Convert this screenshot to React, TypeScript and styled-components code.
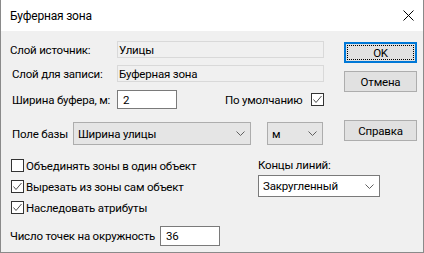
import React from 'react';
import styled, { createGlobalStyle } from 'styled-components';

const GlobalStyle = createGlobalStyle`
  html, body {
    margin: 0;
    padding: 0;
    background: #ffffff;
  }
  body {
    font-family: Roboto, "Noto Sans", "Liberation Sans", sans-serif;
    font-size: 11.5px;
    letter-spacing: -0.2px;
    color: #000000;
  }
  * { box-sizing: border-box; }
`

const Window = styled.div`
  width: 424px;
  height: 253px;
  border: 1px solid #8a8a8a;
  border-top: none;
  background: #f0f0f0;
  display: flex;
  flex-direction: column;
`

const TitleBar = styled.div`
  height: 31px;
  background: #ffffff;
  display: flex;
  align-items: center;
  padding-left: 9px;
  font-size: 12px;
`

const CloseBox = styled.div`
  margin-left: auto;
  width: 30px;
  height: 100%;
  display: flex;
  align-items: center;
  justify-content: center;
`

const Body = styled.div`
  display: flex;
  flex-direction: column;
  padding-left: 9px;
`

const TopSection = styled.div`
  display: flex;
`

const LeftPanel = styled.div`
  width: 314px;
  display: flex;
  flex-direction: column;
`

const Row = styled.div<{ $mt: number; $h: number }>`
  display: flex;
  align-items: center;
  margin-top: ${p => p.$mt}px;
  height: ${p => p.$h}px;
`

const Label = styled.span<{ $w?: number; $pl?: number }>`
  width: ${p => (p.$w ? `${p.$w}px` : 'auto')};
  padding-left: ${p => p.$pl || 0}px;
  white-space: nowrap;
  flex-shrink: 0;
`

const ReadField = styled.div`
  flex: 1;
  height: 100%;
  border: 1px solid #d9d9d9;
  background: #f0f0f0;
  padding-left: 1px;
  display: flex;
  align-items: center;
`

const TextInput = styled.div<{ $w: number }>`
  width: ${p => p.$w}px;
  height: 100%;
  border: 1px solid #7a7a7a;
  background: #ffffff;
  padding-left: 5px;
  display: flex;
  align-items: center;
  flex-shrink: 0;
`

const DefaultLabel = styled.span`
  margin-left: 48px;
  white-space: nowrap;
`

const Box = styled.span<{ $ml?: string }>`
  width: 13px;
  height: 13px;
  border: 1px solid #333333;
  background: #ffffff;
  margin-left: ${p => p.$ml || '0'};
  display: flex;
  align-items: center;
  justify-content: center;
  flex-shrink: 0;
`

const Combo = styled.div<{ $w: number; $ml?: number; $white?: boolean }>`
  width: ${p => p.$w}px;
  height: 100%;
  margin-left: ${p => p.$ml || 0}px;
  border: 1px solid ${p => (p.$white ? '#7a7a7a' : '#adadad')};
  background: ${p => (p.$white ? '#ffffff' : '#e5e5e5')};
  padding: 0 4px;
  display: flex;
  align-items: center;
  flex-shrink: 0;
  svg { margin-left: auto; margin-right: 1px; }
`

const ButtonCol = styled.div`
  margin-left: 20px;
  width: 73px;
  display: flex;
  flex-direction: column;
`

const Button = styled.div<{ $mt: number; $primary?: boolean }>`
  position: relative;
  height: 21px;
  margin-top: ${p => p.$mt}px;
  border: ${p => (p.$primary ? '2px solid #0078d7' : '1px solid #adadad')};
  background: #e1e1e1;
  display: flex;
  align-items: center;
  justify-content: center;
  &::after {
    content: '';
    display: ${p => (p.$primary ? 'block' : 'none')};
    position: absolute;
    inset: 1px;
    border: 1px dotted #000000;
  }
`

const BottomSection = styled.div`
  display: flex;
  margin-top: 14px;
`

const CheckCol = styled.div`
  width: 248px;
  padding-left: 1px;
  display: flex;
  flex-direction: column;
  gap: 8px;
`

const CheckRow = styled.div`
  display: flex;
  align-items: center;
  height: 13px;
  gap: 2px;
  white-space: nowrap;
`

const EndsGroup = styled.div`
  display: flex;
  flex-direction: column;
  margin-top: -1px;
`

const EndsLabel = styled.span`
  height: 14px;
  line-height: 14px;
  white-space: nowrap;
`

const EndsCombo = styled.div`
  margin-top: 3px;
  height: 22px;
`

const PointsRow = styled.div`
  display: flex;
  align-items: center;
  margin-top: 12px;
  height: 20px;
`

const CheckMark = () => (
  <svg width="11" height="11" viewBox="0 0 11 11">
    <polyline points="1.5,5.5 4,8.5 9.5,2" fill="none" stroke="#4d4d4d" strokeWidth="1" />
  </svg>
)

const Chevron = () => (
  <svg width="9" height="5" viewBox="0 0 9 5">
    <polyline points="0.5,0.5 4.5,4.5 8.5,0.5" fill="none" stroke="#606060" strokeWidth="1" />
  </svg>
)

const CheckBox: React.FC<{ checked?: boolean; ml?: string }> = ({ checked, ml }) => (
  <Box $ml={ml}>{checked && <CheckMark />}</Box>
)

const App: React.FC = () => {
  return (
    <>
      <GlobalStyle />
      <Window>
        <TitleBar>
          <span>Буферная зона</span>
          <CloseBox>
            <svg width="11" height="11" viewBox="0 0 11 11">
              <path d="M0.5 0.5 L10.5 10.5 M10.5 0.5 L0.5 10.5" stroke="#000" strokeWidth="1" />
            </svg>
          </CloseBox>
        </TitleBar>
        <Body>
          <TopSection>
            <LeftPanel>
              <Row $mt={10} $h={17}>
                <Label $w={107}>Слой источник:</Label>
                <ReadField>Улицы</ReadField>
              </Row>
              <Row $mt={7} $h={17}>
                <Label $w={107} $pl={2}>Слой для записи:</Label>
                <ReadField>Буферная зона</ReadField>
              </Row>
              <Row $mt={8} $h={19}>
                <Label $w={107} $pl={2}>Ширина буфера, м:</Label>
                <TextInput $w={60}>2</TextInput>
                <DefaultLabel>По умолчанию</DefaultLabel>
                <CheckBox checked ml="auto" />
              </Row>
              <Row $mt={13} $h={23}>
                <Label $w={63} $pl={2}>Поле базы</Label>
                <Combo $w={178}>
                  Ширина улицы
                  <Chevron />
                </Combo>
                <Combo $w={56} $ml={16}>
                  м
                  <Chevron />
                </Combo>
              </Row>
            </LeftPanel>
            <ButtonCol>
              <Button $mt={11} $primary>OK</Button>
              <Button $mt={8}>Отмена</Button>
              <Button $mt={28}>Справка</Button>
            </ButtonCol>
          </TopSection>
          <BottomSection>
            <CheckCol>
              <CheckRow>
                <CheckBox />
                Объединять зоны в один объект
              </CheckRow>
              <CheckRow>
                <CheckBox checked />
                Вырезать из зоны сам объект
              </CheckRow>
              <CheckRow>
                <CheckBox checked />
                Наследовать атрибуты
              </CheckRow>
            </CheckCol>
            <EndsGroup>
              <EndsLabel>Концы линий:</EndsLabel>
              <EndsCombo>
                <Combo $w={122} $white>
                  Закругленный
                  <Chevron />
                </Combo>
              </EndsCombo>
            </EndsGroup>
          </BottomSection>
          <PointsRow>
            <Label $w={150}>Число точек на окружность</Label>
            <TextInput $w={60}>36</TextInput>
          </PointsRow>
        </Body>
      </Window>
    </>
  );
}

export default App;
